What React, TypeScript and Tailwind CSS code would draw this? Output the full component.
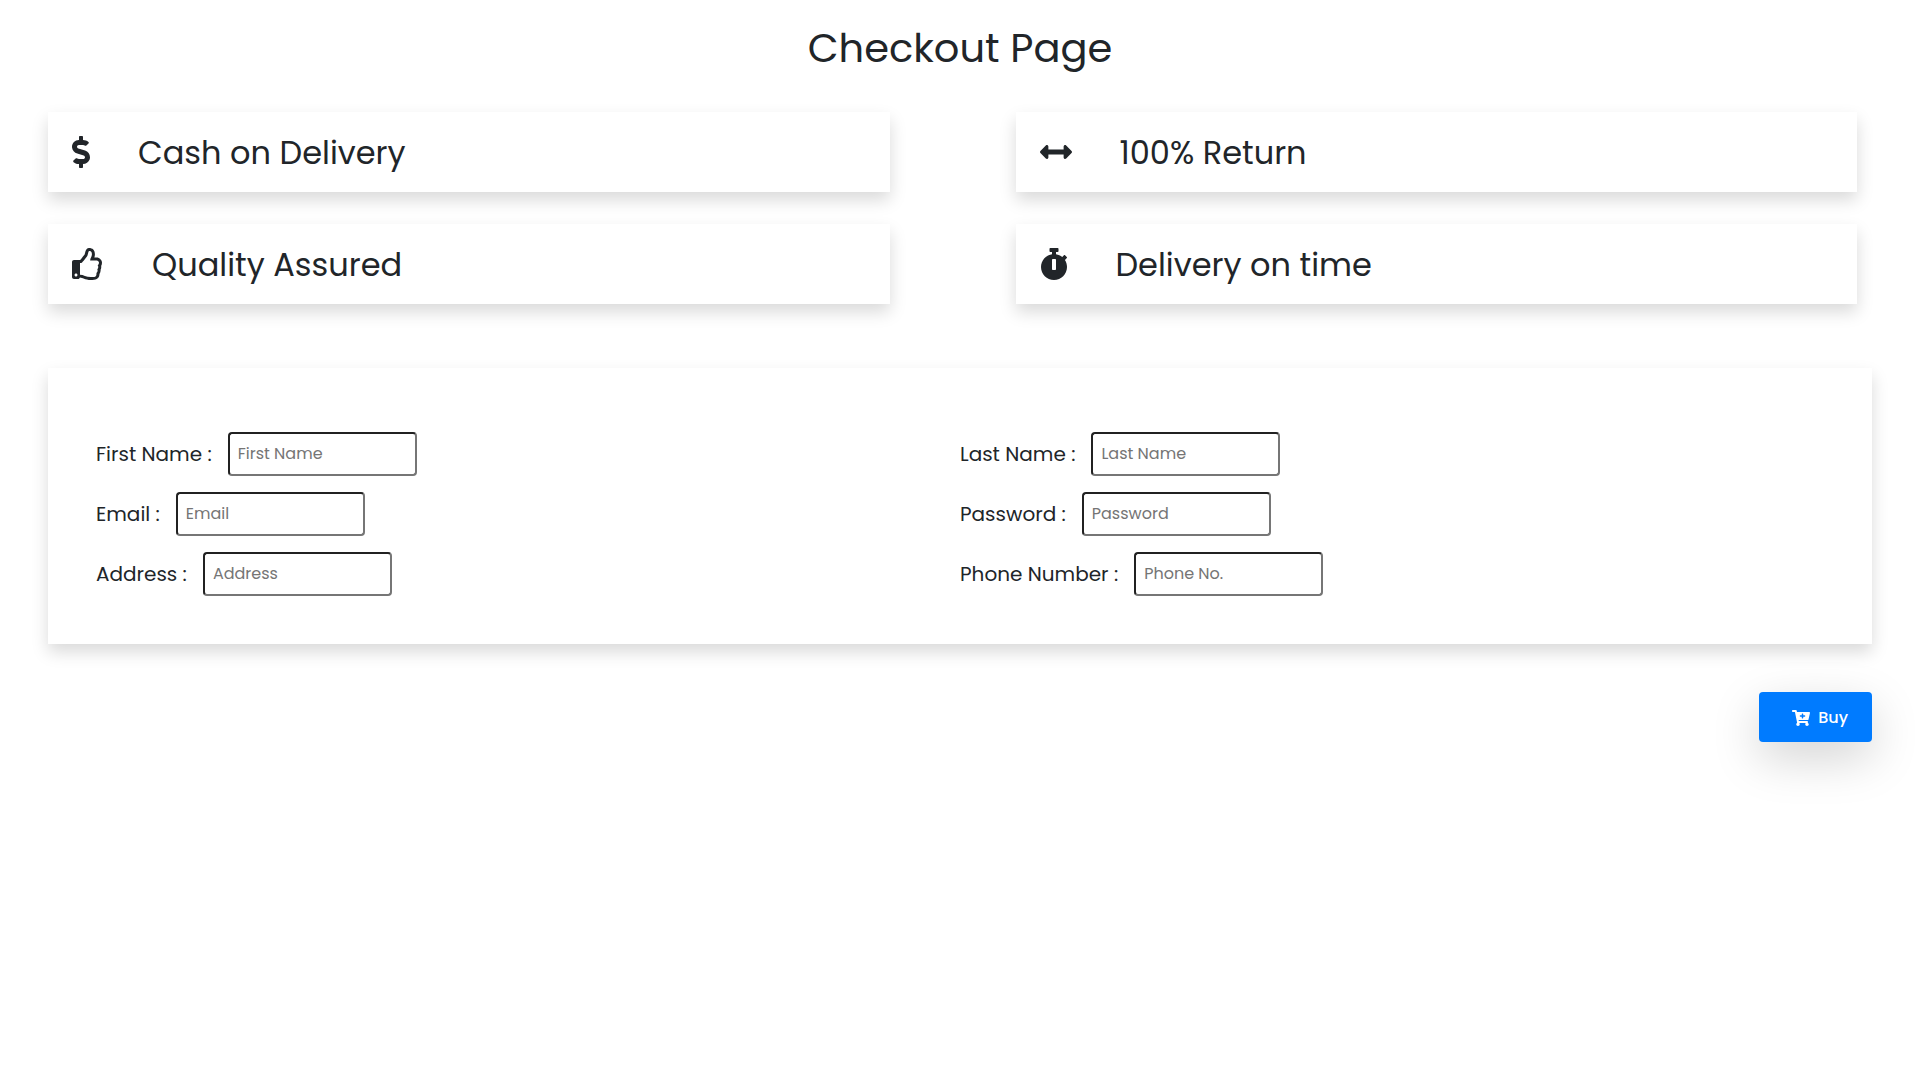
import type { ComponentType } from "react";
import { FaArrowsAltH, FaCartPlus, FaDollarSign, FaRegThumbsUp, FaStopwatch } from "react-icons/fa";

type Feature = {
  label: string;
  icon: ComponentType<{ className?: string }>;
  iconWidth: string;
};

const features: Feature[] = [
  { label: "Cash on Delivery", icon: FaDollarSign, iconWidth: "w-[18px]" },
  { label: "100% Return", icon: FaArrowsAltH, iconWidth: "w-8" },
  { label: "Quality Assured", icon: FaRegThumbsUp, iconWidth: "w-8" },
  { label: "Delivery on time", icon: FaStopwatch, iconWidth: "w-7" },
];

const fields = [
  { id: "first-name", label: "First Name :", placeholder: "First Name", type: "text" },
  { id: "last-name", label: "Last Name :", placeholder: "Last Name", type: "text" },
  { id: "email", label: "Email :", placeholder: "Email", type: "email" },
  { id: "password", label: "Password :", placeholder: "Password", type: "password" },
  { id: "address", label: "Address :", placeholder: "Address", type: "text" },
  { id: "phone", label: "Phone Number :", placeholder: "Phone No.", type: "tel" },
];

function FeatureCard({ label, icon: Icon, iconWidth }: Feature) {
  return (
    <div className="flex h-20 items-center gap-12 bg-white px-6 shadow-[0_8px_16px_rgba(0,0,0,0.15)]">
      <Icon className={`h-8 shrink-0 ${iconWidth}`} />
      <h2 className="pt-0.5 text-[32px] leading-10">{label}</h2>
    </div>
  );
}

export default function App() {
  return (
    <main className="min-h-screen bg-white font-[Poppins,Inter,sans-serif] text-[#212529]">
      <h1 className="pt-6 text-center text-[40px] leading-12">Checkout Page</h1>

      <section className="mt-10 grid grid-cols-2 gap-x-[126px] gap-y-8 pr-[63px] pl-12">
        {features.map((feature) => (
          <FeatureCard key={feature.label} {...feature} />
        ))}
      </section>

      <form className="mx-12 mt-16" onSubmit={(event) => event.preventDefault()}>
        <div className="grid grid-cols-2 gap-y-4 bg-white px-12 pt-16 pb-12 shadow-[0_8px_16px_rgba(0,0,0,0.15)]">
          {fields.map((field) => (
            <div key={field.id} className="flex items-center gap-4">
              <label htmlFor={field.id} className="text-xl">
                {field.label}
              </label>
              <input
                id={field.id}
                type={field.type}
                placeholder={field.placeholder}
                className="h-11 w-[189px] rounded border-2 border-t-[#212121] border-r-[#767676] border-b-[#767676] border-l-[#212121] bg-white px-2 pb-0.5 text-base placeholder:text-[#757575]"
              />
            </div>
          ))}
        </div>

        <div className="mt-12 flex justify-end">
          <button
            type="submit"
            className="flex h-[50px] items-center gap-2 rounded bg-[#007bff] pt-0.5 pr-6 pl-[33px] text-base font-medium text-white shadow-[0_16px_48px_rgba(0,0,0,0.175)]"
          >
            <FaCartPlus className="h-4 w-[18px]" />
            Buy
          </button>
        </div>
      </form>
    </main>
  );
}
